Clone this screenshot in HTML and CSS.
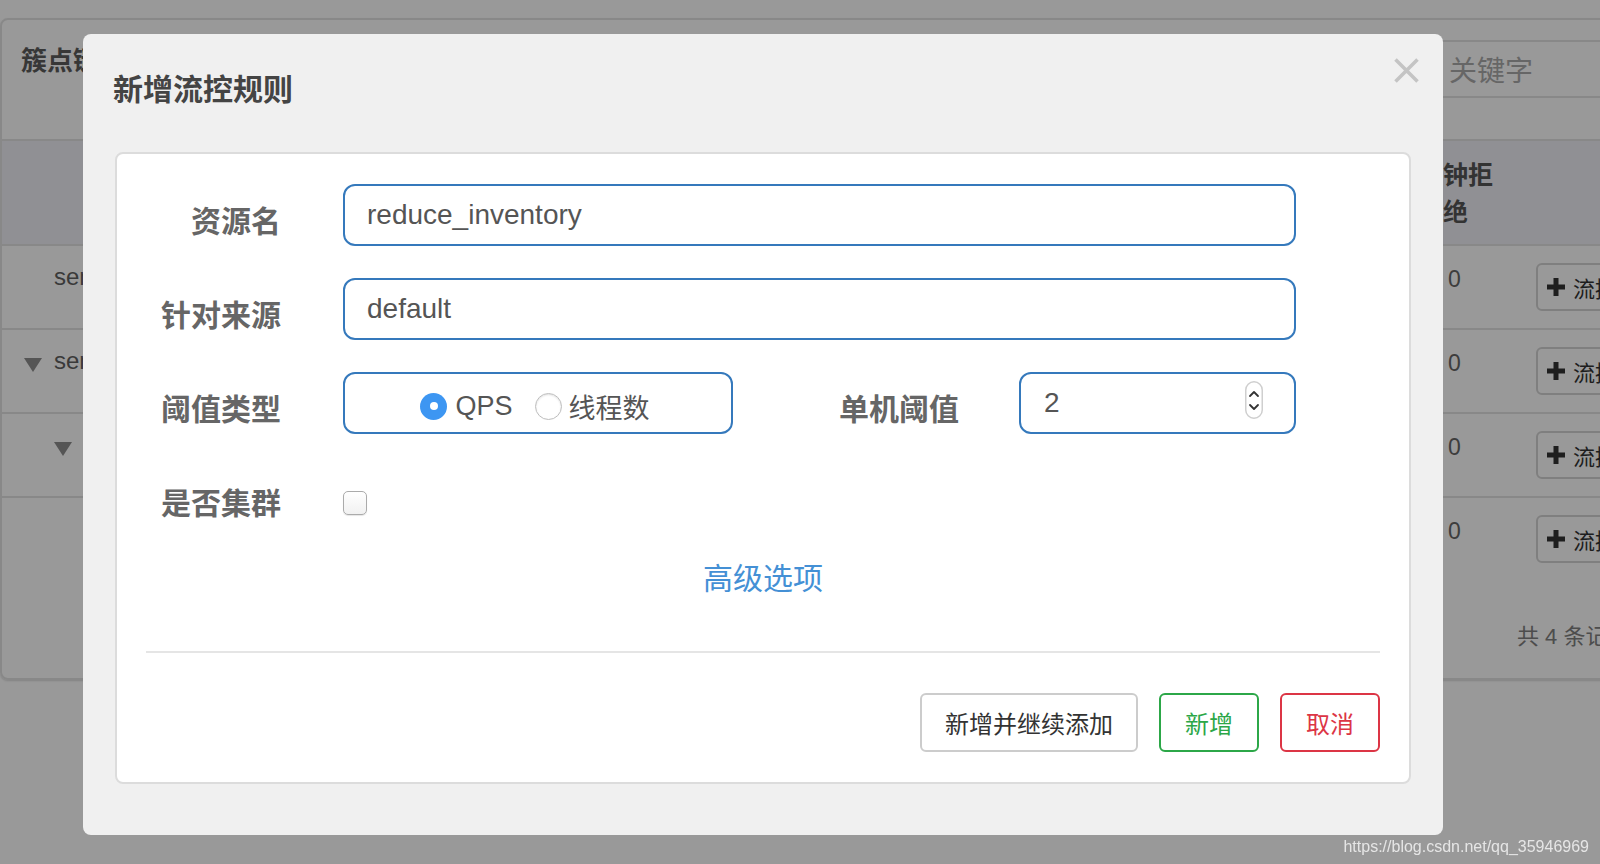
FILE: index.html
```html
<!DOCTYPE html>
<html lang="zh-CN">
<head>
<meta charset="utf-8">
<title>新增流控规则</title>
<link rel="stylesheet" href="styles.css">
</head>
<body>
<div class="page">
  <div class="box">
    <div class="box-head">
      <h3 class="box-title">簇点链路</h3>
      <div class="search">关键字</div>
    </div>
    <div class="thead">
      <div></div>
      <div class="th-col">钟拒绝</div>
    </div>
    <div class="trow">
      <div class="tree lvl1"><span class="tree-text">sentinel_default_context</span></div>
      <div class="val">0</div>
      <div class="act"><button class="btn-flow"><svg class="plus" viewBox="0 0 18 18" width="18" height="18"><path d="M6.5 0h5v6.5H18v5h-6.5V18h-5v-6.5H0v-5h6.5z" fill="#333"/></svg><span>流控</span></button></div>
    </div>
    <div class="trow">
      <div class="tree lvl0"><svg class="caret" viewBox="0 0 18 14" width="18" height="14"><polygon points="0,0 18,0 9,14" fill="#8e8e8e"/></svg><span class="tree-text">sentinel_spring_web_context</span></div>
      <div class="val">0</div>
      <div class="act"><button class="btn-flow"><svg class="plus" viewBox="0 0 18 18" width="18" height="18"><path d="M6.5 0h5v6.5H18v5h-6.5V18h-5v-6.5H0v-5h6.5z" fill="#333"/></svg><span>流控</span></button></div>
    </div>
    <div class="trow">
      <div class="tree lvl1"><svg class="caret" viewBox="0 0 18 14" width="18" height="14"><polygon points="0,0 18,0 9,14" fill="#8e8e8e"/></svg></div>
      <div class="val">0</div>
      <div class="act"><button class="btn-flow"><svg class="plus" viewBox="0 0 18 18" width="18" height="18"><path d="M6.5 0h5v6.5H18v5h-6.5V18h-5v-6.5H0v-5h6.5z" fill="#333"/></svg><span>流控</span></button></div>
    </div>
    <div class="trow">
      <div class="tree lvl2"></div>
      <div class="val">0</div>
      <div class="act"><button class="btn-flow"><svg class="plus" viewBox="0 0 18 18" width="18" height="18"><path d="M6.5 0h5v6.5H18v5h-6.5V18h-5v-6.5H0v-5h6.5z" fill="#333"/></svg><span>流控</span></button></div>
    </div>
    <div class="box-foot">共 4 条记录, 第 1 / 1 页</div>
  </div>
</div>

<div class="backdrop"></div>

<div class="modal">
  <div class="modal-header">
    <h4 class="modal-title">新增流控规则</h4>
    <svg class="close" viewBox="0 0 25 25" width="25" height="25"><path d="M1.5 1.5L23.5 23.5M23.5 1.5L1.5 23.5" stroke="#c4c4c4" stroke-width="3.6" fill="none"/></svg>
  </div>
  <div class="panel">
    <div class="form">
      <div class="form-row">
        <label class="label">资源名</label>
        <div class="input">reduce_inventory</div>
      </div>
      <div class="form-row">
        <label class="label">针对来源</label>
        <div class="input">default</div>
      </div>
      <div class="form-row">
        <label class="label">阈值类型</label>
        <div class="radio-group">
          <span class="radio on"></span><span class="radio-text">QPS</span>
          <span class="radio off"></span><span class="radio-text">线程数</span>
        </div>
        <label class="label label2">单机阈值</label>
        <div class="num">
          <span>2</span>
          <svg class="spin" viewBox="0 0 18 38" width="18" height="38"><rect x="0.75" y="0.75" width="16.5" height="36.5" rx="8.25" fill="#fff" stroke="#cfcfcf" stroke-width="1.5"/><path d="M5 15L9 11L13 15M5 24L9 28L13 24" stroke="#333" stroke-width="1.8" fill="none" stroke-linecap="round" stroke-linejoin="round"/></svg>
        </div>
      </div>
      <div class="form-row">
        <label class="label">是否集群</label>
        <span class="checkbox"></span>
      </div>
    </div>
    <div class="adv">高级选项</div>
    <div class="divider"></div>
    <div class="footer">
      <button class="btn btn-default">新增并继续添加</button>
      <button class="btn btn-success">新增</button>
      <button class="btn btn-danger">取消</button>
    </div>
  </div>
</div>

<div class="watermark">https://blog.csdn.net/qq_35946969</div>
</body>
</html>
```
FILE: styles.css
```css
* { box-sizing: border-box; margin: 0; padding: 0; }
html, body { width: 1600px; height: 864px; overflow: hidden; }
body {
  background: #fff;
  font-family: "Liberation Sans", "Noto Sans CJK SC", sans-serif;
  color: #333;
}

/* ---------- underlying page ---------- */
.page { padding-top: 18px; width: 1640px; }
.box {
  width: 1640px;
  height: 662px;
  border: 2px solid #e3e3e3;
  border-radius: 8px;
  box-shadow: 0 1px 2px rgba(0,0,0,0.15);
  display: flex;
  flex-direction: column;
}
.box-head {
  height: 119px;
  display: flex;
  align-items: flex-start;
  padding: 20px 0 0 19px;
}
.box-title { font-size: 26px; line-height: 36px; font-weight: 700; color: #5c5c5c; padding-top: 3px; }
.search {
  margin-left: auto;
  width: 218px;
  height: 58px;
  border: 2px solid #e3e3e3;
  border-right: none;
  border-radius: 6px 0 0 6px;
  display: flex;
  align-items: center;
  padding-left: 27px;
  font-size: 28px;
  color: #aaa;
}
.thead {
  height: 105px;
  border-top: 2px solid #e3e3e3;
  background: #f0f0f7;
  display: grid;
  grid-template-columns: 1441px 1fr;
  padding-top: 16px;
}
.th-col { width: 55px; font-size: 25px; line-height: 37px; font-weight: 700; color: #555; }
.trow {
  height: 84px;
  border-top: 2px solid #e3e3e3;
  display: grid;
  grid-template-columns: 1441px 93px 1fr;
  align-items: start;
}
.tree {
  display: flex;
  align-items: center;
  height: 30px;
  margin-top: 16px;
  font-size: 24px;
  color: #616161;
  white-space: nowrap;
  overflow: hidden;
}
.tree.lvl0 { padding-left: 22px; }
.tree.lvl1 { padding-left: 52px; }
.tree.lvl2 { padding-left: 112px; }
.caret { margin: 8px 12px 0 0; flex: none; }
.val { padding: 18px 0 0 5px; font-size: 23px; line-height: 30px; color: #666; }
.act { height: 82px; display: flex; align-items: center; }
.btn-flow {
  height: 48px;
  border: 2px solid #d4d4d4;
  border-radius: 6px;
  background: #fff;
  padding: 0 14px 0 9px;
  display: flex;
  align-items: center;
  gap: 8px;
  font-family: inherit;
  font-size: 22px;
  color: #333;
  white-space: nowrap;
}
.box-foot { padding: 42px 0 0 1515px; font-size: 22px; line-height: 30px; color: #808080; white-space: nowrap; }

/* ---------- modal ---------- */
.backdrop { position: fixed; inset: 0; background: rgba(0,0,0,0.4); }
.modal {
  position: fixed;
  left: 83px;
  top: 34px;
  width: 1360px;
  height: 801px;
  background: #f0f0f0;
  border-radius: 8px;
}
.modal-header { height: 118px; padding: 36px 0 0 30px; }
.modal-title { font-size: 30px; line-height: 40px; font-weight: 700; color: #444; }
.close { position: absolute; top: 24px; right: 24px; }

.panel {
  margin: 0 32px;
  height: 632px;
  background: #fff;
  border: 2px solid #dcdcdc;
  border-radius: 8px;
  padding: 30px 29px;
}
.form { display: flex; flex-direction: column; gap: 32px; }
.form-row { display: flex; align-items: center; height: 62px; }
.label {
  width: 135px;
  margin-right: 62px;
  text-align: right;
  padding-top: 13px;
  font-size: 30px;
  line-height: 40px;
  font-weight: 700;
  color: #666;
  flex: none;
}
.label2 { width: 226px; margin-right: 60px; }
.input {
  width: 953px;
  height: 62px;
  border: 2px solid #3579bc;
  border-radius: 12px;
  padding-left: 22px;
  display: flex;
  align-items: center;
  font-size: 28px;
  color: #555;
}
.radio-group {
  width: 390px;
  height: 62px;
  border: 2px solid #3579bc;
  border-radius: 12px;
  display: flex;
  justify-content: center;
  align-items: center;
  padding: 6px 6px 0 0;
  font-size: 27px;
  color: #555;
  flex: none;
}
.radio { width: 27px; height: 27px; border-radius: 50%; flex: none; }
.radio.on { background: #3d96f2; display: flex; align-items: center; justify-content: center; }
.radio.on::after { content: ""; width: 8px; height: 8px; border-radius: 50%; background: #fff; }
.radio.off { background: #fff; border: 1.5px solid #bdbdbd; box-shadow: inset 0 1px 2px rgba(0,0,0,0.12); margin-left: 22px; }
.radio-text { margin-left: 8px; }
.radio.off + .radio-text { margin-left: 7px; }
.num {
  width: 277px;
  height: 62px;
  border: 2px solid #3579bc;
  border-radius: 12px;
  padding: 0 31px 0 23px;
  display: flex;
  align-items: center;
  justify-content: space-between;
  font-size: 28px;
  color: #555;
  flex: none;
}
.spin { margin-bottom: 6px; }
.checkbox {
  width: 24px;
  height: 24px;
  margin-top: 12px;
  border: 1.5px solid #ababab;
  border-radius: 5px;
  background: linear-gradient(#fff, #f1f1f1);
  box-shadow: 0 1px 1px rgba(0,0,0,0.1);
}
.adv { margin-top: 31px; text-align: center; font-size: 30px; line-height: 40px; color: #4490d5; }
.divider { margin-top: 52px; height: 2px; background: #e5e5e5; }
.footer { margin-top: 40px; display: flex; justify-content: flex-end; gap: 21px; }
.btn {
  height: 59px;
  padding: 0 23px;
  border: 2px solid #ccc;
  border-radius: 6px;
  background: #fff;
  font-family: inherit;
  font-size: 24px;
  color: #333;
}
.btn-success, .btn-danger { padding: 0 24px; }
.btn-success { border-color: #2ca748; color: #2ca748; }
.btn-danger { border-color: #dc3545; color: #dc3545; }

.watermark {
  position: absolute;
  right: 11px;
  bottom: 8px;
  font-size: 16px;
  line-height: 18px;
  color: rgba(255,255,255,0.75);
  white-space: nowrap;
}
```
